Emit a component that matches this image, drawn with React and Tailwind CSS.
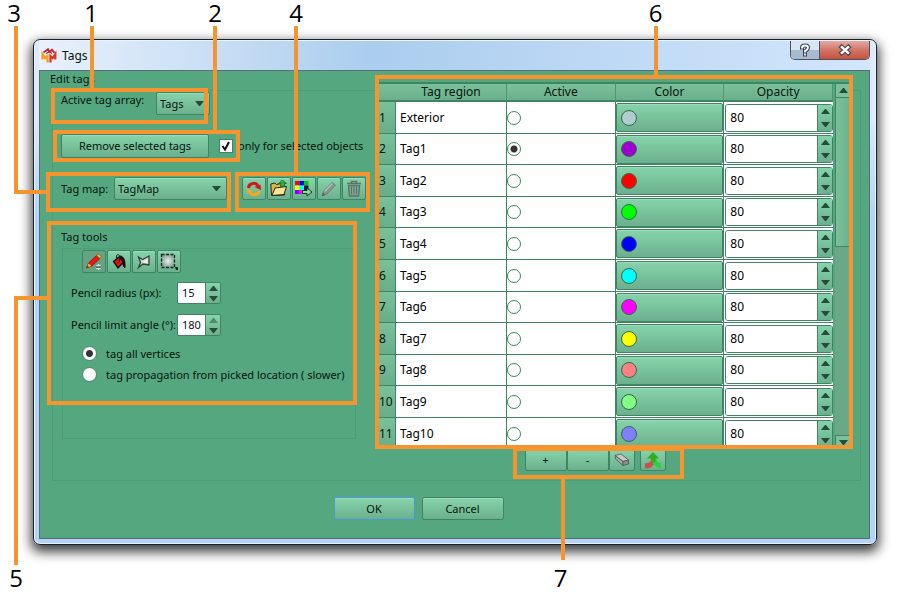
import React from "react";

const REGIONS = [
  ["Exterior", "#b0cccc"],
  ["Tag1", "#a000d0"],
  ["Tag2", "#ff0000"],
  ["Tag3", "#00ff00"],
  ["Tag4", "#0000ff"],
  ["Tag5", "#00ffff"],
  ["Tag6", "#ff00ff"],
  ["Tag7", "#ffff00"],
  ["Tag8", "#ff8080"],
  ["Tag9", "#80ff80"],
  ["Tag10", "#8080ff"],
];

const SHAPE = "border rounded-[2px]";
const FILL = "bg-linear-to-b from-[#86d4ab] to-[#6bb08d] shadow-[inset_0_1px_0_#9adcba]";
const FACE = `${SHAPE} ${FILL} border-[#3f8562]`;
const FACE_DEFAULT = `${SHAPE} ${FILL} border-[#4a98dc]`;
const FACE_PRESSED = `${SHAPE} bg-[#66a385] border-[#3f8562]`;

function Arrow({ up, dim, className = "" }) {
  return (
    <svg width="9" height="5" viewBox="0 0 9 5" className={className} aria-hidden="true">
      <path d={up ? "M0 5L4 0h1l4 5z" : "M0 0h9L5 5H4z"} fill={dim ? "#4d8b6b" : "#284a3a"} />
    </svg>
  );
}

function Picker({ id, value, width }) {
  return (
    <div className={`relative ${width}`}>
      <select id={id} className={`${FACE} block h-[23px] w-full appearance-none pl-[3px] text-[11px] outline-none`}>
        <option>{value}</option>
      </select>
      <Arrow className="pointer-events-none absolute right-[6px] top-[9px]" />
    </div>
  );
}

function ToolButton({ label, pressed, children }) {
  return (
    <button
      type="button"
      aria-label={label}
      className={`${pressed ? FACE_PRESSED : FACE} flex h-[23px] w-6 shrink-0 items-center justify-center`}
    >
      {children}
    </button>
  );
}

function Spin({ id, value, dimUp }) {
  return (
    <div className="flex h-[22px] w-[44px] overflow-hidden rounded-[2px] border border-[#3f8562]">
      <input id={id} defaultValue={value} className="w-[27px] bg-white pl-1 text-[11px] outline-none" />
      <div className="flex flex-1 flex-col border-l border-[#3f8562] bg-linear-to-b from-[#86d4ab] to-[#6bb08d]">
        <button type="button" aria-label="Increase" className="flex flex-1 items-center justify-center">
          <Arrow up dim={dimUp} />
        </button>
        <button type="button" aria-label="Decrease" className="flex flex-1 items-center justify-center">
          <Arrow />
        </button>
      </div>
    </div>
  );
}

function Box({ className }) {
  return <div className={`absolute border-4 border-[#f7942d] ${className}`} />;
}
function Line({ className }) {
  return <div className={`absolute bg-[#f7942d] ${className}`} />;
}
function Num({ className, children }) {
  return (
    <span className={`absolute w-6 text-center font-['Open_Sans','Noto_Sans',sans-serif] text-2xl leading-6 text-black ${className}`}>
      {children}
    </span>
  );
}

function LeftCallouts() {
  return (
    <div className="pointer-events-none absolute left-0 top-0 z-10">
      <Num className="left-[79px] top-[1px]">1</Num>
      <Line className="left-[90px] top-[26px] h-[62px] w-1" />
      <Box className="left-[51px] top-[88px] h-[36px] w-[157px]" />
      <Num className="left-[203px] top-[1px]">2</Num>
      <Line className="left-[213px] top-[26px] h-[104px] w-1" />
      <Box className="left-[53px] top-[130px] h-[32px] w-[187px]" />
      <Num className="left-[2px] top-[1px]">3</Num>
      <Line className="left-[14px] top-[26px] h-[168px] w-1" />
      <Line className="left-[14px] top-[190px] h-1 w-[34px]" />
      <Box className="left-[46px] top-[172px] h-[40px] w-[185px]" />
      <Num className="left-[284px] top-[1px]">4</Num>
      <Line className="left-[294px] top-[26px] h-[146px] w-1" />
      <Box className="left-[235px] top-[172px] h-[40px] w-[135px]" />
      <Line className="left-[14px] top-[296px] h-1 w-[34px]" />
      <Line className="left-[14px] top-[296px] h-[269px] w-1" />
      <Box className="left-[47px] top-[221px] h-[184px] w-[310px]" />
      <Num className="left-[4px] top-[566px]">5</Num>
    </div>
  );
}

function TagTable() {
  return (
    <div className="flex h-[363px] overflow-hidden border-t-2 border-[#3f8562] bg-[#55a77f] text-xs">
      <div className="min-w-0 flex-1 overflow-hidden">
        <table className="w-full table-fixed border-separate border-spacing-0">
          <colgroup>
            <col className="w-[17px]" />
            <col className="w-[111px]" />
            <col />
            <col />
            <col />
          </colgroup>
          <thead>
            <tr className="h-[18px] bg-linear-to-b from-[#79c19b] to-[#69ad8a] leading-4">
              <th className="border-b-2 border-b-[#3f8562] p-0" aria-label="Row" />
              {["Tag region", "Active", "Color", "Opacity"].map((h) => (
                <th key={h} scope="col" className="border-b-2 border-r border-b-[#3f8562] border-r-[#559472] p-0 font-normal">{h}</th>
              ))}
            </tr>
          </thead>
          <tbody>
            {REGIONS.map(([name, color], i) => (
              <tr key={name} className={i % 5 === 1 || i % 5 === 3 ? "h-[31px]" : "h-8"}>
                <th scope="row" className="border-b border-r border-[#3f8562] bg-linear-to-b from-[#79c19b] to-[#69ad8a] p-0 text-left font-normal">
                  {i + 1}
                </th>
                <td className="border-b border-r border-[#3f8562] bg-white p-0 pl-1 text-black">{name}</td>
                <td className="border-b border-r border-[#3f8562] bg-white p-0">
                  <input
                    type="radio"
                    name="active"
                    defaultChecked={i === 1}
                    aria-label={`${name} active`}
                    className="block size-[14px] appearance-none rounded-full border border-[#3f8562] bg-white checked:bg-[radial-gradient(circle,#333_3px,#fff_4px)]"
                  />
                </td>
                <td className="border-b border-r border-[#3f8562] bg-white p-0">
                  <button type="button" aria-label={`${name} color`} className={`${FACE} flex h-[29px] w-full items-center pl-1`}>
                    <span className="size-4 rounded-full border border-[#34684f]" style={{ backgroundColor: color }} />
                  </button>
                </td>
                <td className="border-b border-[#3f8562] bg-white p-0 pl-px">
                  <div className="flex h-[28px] overflow-hidden rounded-[3px] border border-[#3f8562]">
                    <input aria-label={`${name} opacity`} defaultValue="80" className="min-w-0 flex-1 bg-white pl-1 text-black outline-none" />
                    <div className="flex w-[15px] flex-col border-l border-[#3f8562] bg-linear-to-b from-[#86d4ab] to-[#6bb08d]">
                      <button type="button" aria-label="Increase" className="flex flex-1 items-center justify-center"><Arrow up /></button>
                      <button type="button" aria-label="Decrease" className="flex flex-1 items-center justify-center"><Arrow /></button>
                    </div>
                  </div>
                </td>
              </tr>
            ))}
          </tbody>
        </table>
      </div>
      <div className="ml-[2px] flex w-[15px] flex-col bg-[#69a987]">
        <button type="button" aria-label="Scroll up" className="flex h-[14px] items-center justify-center border-b border-l border-[#3f8562] bg-[#79c19b]"><Arrow up /></button>
        <div className="h-[149px] border-b border-l border-[#3f8562] bg-linear-to-r from-[#79c19b] to-[#6db28e]" />
        <div className="flex-1" />
        <button type="button" aria-label="Scroll down" className="flex h-[10px] items-end justify-center border-l border-t border-[#3f8562] bg-[#79c19b]"><Arrow /></button>
      </div>
    </div>
  );
}

function AppMark() {
  return (
    <svg width="16" height="16" viewBox="0 0 16 16" aria-hidden="true">
      <path d="M8 4.500l5.500 2.500v5L8 15l-5.500-3V7z" fill="#fbe6dc" />
      <path d="M2.500 4.500L7 1.200l1 2.600 3-2 2.500 3" fill="none" stroke="#c0282d" strokeWidth="1.800" />
      <path d="M5 5.500l3.500-1.700L11 5.500" fill="none" stroke="#c0282d" strokeWidth="1.200" />
      <path d="M1.500 11.500V6l2.500 4 2.500-2v6.500" fill="none" stroke="#f0a01e" strokeWidth="2.200" />
      <path d="M9.500 14.500V8l2.200 2L14.300 6v5.500" fill="none" stroke="#cf3a2c" strokeWidth="2.200" />
    </svg>
  );
}

function RefreshIcon() {
  return (
    <svg width="16" height="16" viewBox="0 0 16 16" aria-hidden="true">
      <path d="M2.500 7C3 1.500 10 1 12 5" fill="none" stroke="#d01818" strokeWidth="3" />
      <path d="M8.500 6l6-2.500.5 5.500z" fill="#d01818" />
      <path d="M13 10c-1 4.500-7 5-9 1.500" fill="none" stroke="#f5a81c" strokeWidth="3" />
      <path d="M1 7.500l6 2.500-5.500 3z" fill="#f5a81c" />
    </svg>
  );
}
function FolderIcon() {
  return (
    <svg width="18" height="17" viewBox="0 0 18 17" aria-hidden="true">
      <path d="M1.500 15.500L.8 4l4-1 1.500 1.500L13.500 3l1 12z" fill="#d9b83f" stroke="#2b2414" />
      <path d="M2 15.500L5 8l11.500-1.500L14 14.500z" fill="#f7e594" stroke="#2b2414" />
      <path d="M12.500 0L16.500 3.500h-2v3h-4v-3h-2z" fill="#36a83a" stroke="#155d22" strokeWidth=".7" />
    </svg>
  );
}
function PaletteIcon() {
  return (
    <svg width="18" height="17" viewBox="0 0 18 17" aria-hidden="true">
      <path d="M0 1h4.500v4.500H0z" fill="#f00" />
      <path d="M4.500 1H9v4.500H4.500z" fill="#00e" />
      <path d="M9 1h4.500v4.500H9z" fill="#0c0" />
      <path d="M0 5.500h4.500V10H0z" fill="#ff0" />
      <path d="M4.500 5.500H9V10H4.500z" fill="#0ff" />
      <path d="M9 5.500h4.500V10H9z" fill="#114" />
      <path d="M0 10h4.500v4H0z" fill="#80f" />
      <path d="M4.500 10H9v4H4.500z" fill="#f0f" />
      <path d="M7.500 10.500H12V8l5 4-5 4v-2.500H7.500z" fill="#8ee08e" stroke="#153820" />
    </svg>
  );
}
function GreyPencil() {
  return (
    <svg width="16" height="16" viewBox="0 0 16 16" aria-hidden="true">
      <path d="M1 15l1.500-5L11 1.500 14.500 4 6 13z" fill="#87948d" stroke="#6c7a73" strokeWidth=".8" />
      <path d="M3.500 10.500L11.500 2.500" stroke="#b5bfba" strokeWidth="1.200" />
      <path d="M1 15l1-3.500L4.500 14z" fill="#56695e" />
    </svg>
  );
}
function TrashIcon() {
  return (
    <svg width="16" height="17" viewBox="0 0 16 17" fill="none" stroke="#5d7468" aria-hidden="true">
      <path d="M1 3.500h14M5.500 3V1.500h5V3" strokeWidth="1.600" />
      <path d="M2.500 5.500l1 10.500h9l1-10.500z" strokeWidth="1.500" fill="#86ab98" />
      <path d="M5.500 6.500v8M8 6.500v8M10.500 6.500v8" strokeWidth="1.200" />
    </svg>
  );
}
function RedPencil() {
  return (
    <svg width="18" height="18" viewBox="0 0 18 18" aria-hidden="true">
      <path d="M1.500 15l2-5 8-7.500 3.500 3L7 13z" fill="#ec1414" stroke="#8a0f0f" strokeWidth=".7" />
      <path d="M11.500 2.500L13.500 1l3 2.500L15 5.500z" fill="#e9c03b" stroke="#6f5413" strokeWidth=".6" />
      <path d="M1.500 15l2-4.500L6.500 13z" fill="#e8b545" />
      <path d="M1.500 15l.8-2L4 14z" fill="#222" />
      <path d="M13.500 11v6M11.500 12l4 4M15.500 12l-4 4" stroke="#e6e6e6" strokeWidth="1.100" />
      <path d="M11.500 14h4" stroke="#222" strokeWidth="1" />
    </svg>
  );
}
function BucketIcon() {
  return (
    <svg width="17" height="17" viewBox="0 0 17 17" aria-hidden="true">
      <path d="M9 3c3.500 0 5.500 4 5 11.500-1.500 0-2-2.500-2.500-5z" fill="#111" stroke="#111" />
      <path d="M2.500 8.500L8 4l4.500 5L7 15z" fill="#e81212" stroke="#111" strokeWidth="1.400" />
      <path d="M5.500 6.500V2.500q1.500-2 3 0V8" fill="none" stroke="#222" />
      <path d="M6 10.500l2.500-2.500" stroke="#7a0808" />
    </svg>
  );
}
function LassoIcon() {
  return (
    <svg width="16" height="16" viewBox="0 0 16 16" aria-hidden="true">
      <path d="M2.500 3l4 2.500L13 2v9l-6-1-4.500 3.500 2-5z" fill="#c9d0cc" stroke="#34423a" strokeWidth="1.300" />
      <path d="M5.500 6.500l1.500.5 4.500-2v4l-4-.5" fill="#eef1ef" />
    </svg>
  );
}
function MarqueeIcon() {
  return (
    <svg width="18" height="17" viewBox="0 0 18 17" aria-hidden="true">
      <defs>
        <radialGradient id="marquee">
          <stop offset="0" stopColor="#e8f0ec" />
          <stop offset="1" stopColor="#8aa598" />
        </radialGradient>
      </defs>
      <rect x="1.500" y="1.500" width="13" height="13" fill="url(#marquee)" stroke="#16281e" strokeWidth="1.300" strokeDasharray="3 1.500" />
      <path d="M15 14h3v3h-2z" fill="#16281e" />
    </svg>
  );
}
function EraserIcon() {
  return (
    <svg width="16" height="14" viewBox="0 0 16 14" stroke="#4c5550" strokeWidth=".8" aria-hidden="true">
      <path d="M1 2.500L7 1l7.500 6L9 8.500z" fill="#c8c8c8" />
      <path d="M1 2.500L9 8.500v4L1.500 6z" fill="#aaa" />
      <path d="M9 8.500l5.500-1.500v4L9 12.500z" fill="#8d8d8d" />
    </svg>
  );
}
function MergeIcon() {
  return (
    <svg width="18" height="17" viewBox="0 0 18 17" aria-hidden="true">
      <path d="M1 11.500q5.500-.5 7-4.500l2.500 4Q8 17 1 16.500z" fill="#c9504a" />
      <path d="M17 11.500q-4-.5-5-5.500H7.500Q8 15 17 16.500z" fill="#26d43c" />
      <path d="M9 0l6 6.500h-3q-.5 3-2 4.500Q7 9 6.500 6.500H3z" fill="#33ad1e" />
    </svg>
  );
}

export default function App() {
  return (
    <div className="relative min-h-[593px] min-w-[900px] bg-white pb-12 pl-[33px] pr-10 pt-[39px] font-['Noto_Sans','Open_Sans',sans-serif] text-[11px] leading-4 text-[#06150d]">
      <LeftCallouts />
      <main className="rounded-[7px] border border-[#18222c] bg-linear-to-b from-[#dceafc] from-15% to-[#b3d4f6] to-35% pb-[5px] pl-[5px] pr-[6px] shadow-[0_5px_12px_2px_rgba(0,0,0,0.75),inset_0_0_0_1px_#eaf4ff]">
        <header className="mt-px flex h-[29px] items-start bg-linear-to-r from-[#e9f1fc] via-[#abcdee] via-40% to-[#d3e6fd]">
          <div className="flex h-[29px] flex-1 items-center gap-[5px] pl-[2px]">
            <AppMark />
            <h1 className="text-xs">Tags</h1>
          </div>
          <div className="flex h-[19px] overflow-hidden rounded-b-[5px] border border-t-0 border-[#4c5360]">
            <button type="button" aria-label="Help" className="flex w-[29px] items-center justify-center border-r border-[#4c5360] bg-linear-to-b from-[#dbe5f1] from-50% to-[#a9bbcf] to-50%">
              <svg width="12" height="14" viewBox="0 0 12 14" fill="none" strokeLinecap="square" aria-hidden="true">
                <path d="M3 4.500Q3 2.500 6 2.500t3 2T6 8v.5M6 11.500v.1" stroke="#3c4454" strokeWidth="4" />
                <path d="M3 4.500Q3 2.500 6 2.500t3 2T6 8v.5M6 11.500v.1" stroke="#fff" strokeWidth="1.800" />
              </svg>
            </button>
            <button type="button" aria-label="Close" className="flex w-[49px] items-center justify-center bg-linear-to-b from-[#e3aca4] via-[#cf7466] via-50% to-[#c9513c]">
              <svg width="14" height="12" viewBox="0 0 14 12" fill="none" aria-hidden="true">
                <path d="M2 1.500l10 9M12 1.500l-10 9" stroke="#4a4450" strokeWidth="4.600" />
                <path d="M3 2.400l8 7.200M11 2.400l-8 7.200" stroke="#fff" strokeWidth="2.600" />
              </svg>
            </button>
          </div>
        </header>
        <div className="border border-[#5b6b7c] bg-[#55a77f]">
          <div className="relative flex">
            <div className="absolute bottom-0 left-3 right-2 top-[19px] border border-[#4f9d77]" />
            <section className="relative w-[339px] shrink-0 pb-[42px]">
              <h2 className="pl-[10px]">Edit tags</h2>
              <div className="mt-[5px] flex pl-[21px]">
                <label htmlFor="array" className="w-[95px]">Active tag array:</label>
                <Picker id="array" value="Tags" width="w-[54px]" />
              </div>
              <div className="mt-[19px] flex items-center gap-[10px] pl-[21px]">
                <button type="button" className={`${FACE} h-6 w-[148px]`}>Remove selected tags</button>
                <label className="flex items-center gap-[5px] whitespace-nowrap">
                  <span className="relative block size-[14px]">
                    <input type="checkbox" defaultChecked className="block size-[14px] appearance-none border border-[#3f8562] bg-white" />
                    <svg width="14" height="14" viewBox="0 0 14 14" className="pointer-events-none absolute inset-0" aria-hidden="true">
                      <path d="M3.500 7l2.500 3.500L10 3" fill="none" stroke="#111" strokeWidth="2" />
                    </svg>
                  </span>
                  only for selected objects
                </label>
              </div>
              <div className="mt-[19px] flex items-center pl-[21px]">
                <label htmlFor="map" className="w-[53px] whitespace-nowrap">Tag map:</label>
                <Picker id="map" value="TagMap" width="w-[113px]" />
                <div className="ml-[15px] flex gap-px">
                  <ToolButton label="Refresh"><RefreshIcon /></ToolButton>
                  <ToolButton label="Open"><FolderIcon /></ToolButton>
                  <ToolButton label="Colors"><PaletteIcon /></ToolButton>
                  <ToolButton label="Edit"><GreyPencil /></ToolButton>
                  <ToolButton label="Delete"><TrashIcon /></ToolButton>
                </div>
              </div>
              <h2 className="mt-[29px] pl-[21px]">Tag tools</h2>
              <div className="ml-[22px] mt-[3px] w-[294px] border border-[#4f9d77] pb-[56px] pt-px">
                <div className="flex gap-px pl-[19px]">
                  <ToolButton label="Pencil" pressed><RedPencil /></ToolButton>
                  <ToolButton label="Fill"><BucketIcon /></ToolButton>
                  <ToolButton label="Polygon"><LassoIcon /></ToolButton>
                  <ToolButton label="Rectangle"><MarqueeIcon /></ToolButton>
                </div>
                <div className="mt-[9px] flex items-center pl-2">
                  <label htmlFor="radius" className="w-[106px] whitespace-nowrap">Pencil radius (px):</label>
                  <Spin id="radius" value="15" />
                </div>
                <div className="mt-[10px] flex items-center pl-2">
                  <label htmlFor="angle" className="w-[106px] whitespace-nowrap">Pencil limit angle (°):</label>
                  <Spin id="angle" value="180" dimUp />
                </div>
                {["tag all vertices", "tag propagation from picked location ( slower)"].map((t, i) => (
                  <label key={t} className="mt-[6px] flex h-[15px] items-center gap-[9px] whitespace-nowrap pl-[19px] first-of-type:mt-[10px]">
                    <input
                      type="radio"
                      name="mode"
                      defaultChecked={i === 0}
                      className="size-[15px] shrink-0 appearance-none rounded-full border border-[#3f8562] bg-white checked:bg-[radial-gradient(circle,#333_3px,#fff_4px)]"
                    />
                    {t}
                  </label>
                ))}
              </div>
            </section>
            <section className="relative mr-[19px] min-w-0 flex-1 pt-[11px]">
              <TagTable />
              <div className="mt-1 flex justify-center pr-[39px]">
                <button type="button" className={`${FACE} h-[22px] w-[42px]`}>+</button>
                <button type="button" className={`${FACE} h-[22px] w-[42px]`}>-</button>
                <button type="button" aria-label="Erase" className={`${FACE} flex h-[22px] w-[26px] items-center justify-center`}><EraserIcon /></button>
                <button type="button" aria-label="Merge" className={`${FACE} ml-[5px] flex h-[22px] w-[26px] items-center justify-center`}><MergeIcon /></button>
              </div>
              <div className="pointer-events-none absolute inset-0 z-10">
                <Box className="-left-1 -right-[3px] top-1 h-[374px]" />
                <div className="absolute left-1/2 top-0">
                  <Num className="-top-[70px] left-[29px]">6</Num>
                  <Line className="-top-[45px] left-[39px] h-[49px] w-1" />
                  <Box className="-left-[102px] top-[376px] h-[32px] w-[171px]" />
                  <Line className="-left-[54px] top-[408px] h-[81px] w-1" />
                  <Num className="-left-[66px] top-[495px]">7</Num>
                </div>
              </div>
            </section>
          </div>
          <footer className="flex justify-center gap-[7px] pb-[18px] pr-[72px] pt-4">
            <button type="button" className={`${FACE_DEFAULT} h-[23px] w-[81px]`}>OK</button>
            <button type="button" className={`${FACE} h-[23px] w-[82px]`}>Cancel</button>
          </footer>
        </div>
      </main>
    </div>
  );
}
